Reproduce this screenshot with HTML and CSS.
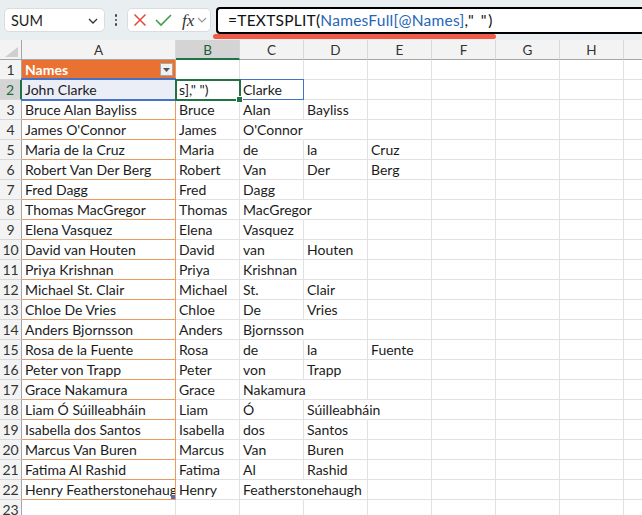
FILE: index.html
```html
<!DOCTYPE html>
<html>
<head>
<meta charset="utf-8">
<link rel="stylesheet" href="styles.css">
</head>
<body>
<div class="topbar">
  <div class="namebox"><span>SUM</span>
    <svg class="chev" width="10" height="6" viewBox="0 0 10 6"><polyline points="1,1 5,5 9,1" fill="none" stroke="#333" stroke-width="1.3"/></svg>
  </div>
  <div class="dots"><i></i><i></i><i></i></div>
  <div class="fxbox">
    <svg width="14" height="14" viewBox="0 0 14 14"><path d="M1.5 1.5 L12.5 12.5 M12.5 1.5 L1.5 12.5" stroke="#e5483c" stroke-width="1.5" fill="none"/></svg>
    <svg width="17" height="14" viewBox="0 0 17 14"><polyline points="1,7 6,12 16,2" stroke="#3aa04c" stroke-width="1.6" fill="none"/></svg>
    <span class="fx">fx</span>
    <svg width="10" height="6" viewBox="0 0 10 6"><polyline points="1,1 5,5 9,1" fill="none" stroke="#9a9a9a" stroke-width="1.2"/></svg>
  </div>
  <div class="formula">=TEXTSPLIT(<span class="ref">NamesFull[@Names]</span><span class="tail">," ")</span></div>
</div>
<div class="underline"></div>
<div class="sheet">
  <div class="corner"><svg width="13" height="10" viewBox="0 0 13 10"><polygon points="13,0 13,10 0,10" fill="#cfcfcf"/></svg></div>
  <div class="ch">A</div><div class="ch sel">B</div><div class="ch">C</div><div class="ch">D</div><div class="ch">E</div><div class="ch">F</div><div class="ch">G</div><div class="ch">H</div><div class="ch"></div>

  <div class="rh">1</div><div class="c th">Names<span class="filt"><svg width="7" height="4" viewBox="0 0 7 4"><polygon points="0,0 7,0 3.5,4" fill="#555"/></svg></span></div><div class="c"></div><div class="c"></div><div class="c"></div><div class="c"></div><div class="c"></div><div class="c"></div><div class="c"></div><div class="c"></div>

  <div class="rh rsel">2</div><div class="c t a2">John Clarke</div><div class="c b2">s]," ")</div><div class="c c2">Clarke</div><div class="c"></div><div class="c"></div><div class="c"></div><div class="c"></div><div class="c"></div><div class="c"></div>

  <div class="rh">3</div><div class="c t">Bruce Alan Bayliss</div><div class="c">Bruce</div><div class="c">Alan</div><div class="c">Bayliss</div><div class="c"></div><div class="c"></div><div class="c"></div><div class="c"></div><div class="c"></div>

  <div class="rh">4</div><div class="c t">James O'Connor</div><div class="c">James</div><div class="c ov">O'Connor</div><div class="c"></div><div class="c"></div><div class="c"></div><div class="c"></div><div class="c"></div><div class="c"></div>

  <div class="rh">5</div><div class="c t">Maria de la Cruz</div><div class="c">Maria</div><div class="c">de</div><div class="c">la</div><div class="c">Cruz</div><div class="c"></div><div class="c"></div><div class="c"></div><div class="c"></div>

  <div class="rh">6</div><div class="c t">Robert Van Der Berg</div><div class="c">Robert</div><div class="c">Van</div><div class="c">Der</div><div class="c">Berg</div><div class="c"></div><div class="c"></div><div class="c"></div><div class="c"></div>

  <div class="rh">7</div><div class="c t">Fred Dagg</div><div class="c">Fred</div><div class="c">Dagg</div><div class="c"></div><div class="c"></div><div class="c"></div><div class="c"></div><div class="c"></div><div class="c"></div>

  <div class="rh">8</div><div class="c t">Thomas MacGregor</div><div class="c">Thomas</div><div class="c ov">MacGregor</div><div class="c"></div><div class="c"></div><div class="c"></div><div class="c"></div><div class="c"></div><div class="c"></div>

  <div class="rh">9</div><div class="c t">Elena Vasquez</div><div class="c">Elena</div><div class="c">Vasquez</div><div class="c"></div><div class="c"></div><div class="c"></div><div class="c"></div><div class="c"></div><div class="c"></div>

  <div class="rh">10</div><div class="c t">David van Houten</div><div class="c">David</div><div class="c">van</div><div class="c">Houten</div><div class="c"></div><div class="c"></div><div class="c"></div><div class="c"></div><div class="c"></div>

  <div class="rh">11</div><div class="c t">Priya Krishnan</div><div class="c">Priya</div><div class="c">Krishnan</div><div class="c"></div><div class="c"></div><div class="c"></div><div class="c"></div><div class="c"></div><div class="c"></div>

  <div class="rh">12</div><div class="c t">Michael St. Clair</div><div class="c">Michael</div><div class="c">St.</div><div class="c">Clair</div><div class="c"></div><div class="c"></div><div class="c"></div><div class="c"></div><div class="c"></div>

  <div class="rh">13</div><div class="c t">Chloe De Vries</div><div class="c">Chloe</div><div class="c">De</div><div class="c">Vries</div><div class="c"></div><div class="c"></div><div class="c"></div><div class="c"></div><div class="c"></div>

  <div class="rh">14</div><div class="c t">Anders Bjornsson</div><div class="c">Anders</div><div class="c ov">Bjornsson</div><div class="c"></div><div class="c"></div><div class="c"></div><div class="c"></div><div class="c"></div><div class="c"></div>

  <div class="rh">15</div><div class="c t">Rosa de la Fuente</div><div class="c">Rosa</div><div class="c">de</div><div class="c">la</div><div class="c">Fuente</div><div class="c"></div><div class="c"></div><div class="c"></div><div class="c"></div>

  <div class="rh">16</div><div class="c t">Peter von Trapp</div><div class="c">Peter</div><div class="c">von</div><div class="c">Trapp</div><div class="c"></div><div class="c"></div><div class="c"></div><div class="c"></div><div class="c"></div>

  <div class="rh">17</div><div class="c t">Grace Nakamura</div><div class="c">Grace</div><div class="c ov">Nakamura</div><div class="c"></div><div class="c"></div><div class="c"></div><div class="c"></div><div class="c"></div><div class="c"></div>

  <div class="rh">18</div><div class="c t">Liam Ó Súilleabháin</div><div class="c">Liam</div><div class="c">Ó</div><div class="c ov">Súilleabháin</div><div class="c"></div><div class="c"></div><div class="c"></div><div class="c"></div><div class="c"></div>

  <div class="rh">19</div><div class="c t">Isabella dos Santos</div><div class="c">Isabella</div><div class="c">dos</div><div class="c">Santos</div><div class="c"></div><div class="c"></div><div class="c"></div><div class="c"></div><div class="c"></div>

  <div class="rh">20</div><div class="c t">Marcus Van Buren</div><div class="c">Marcus</div><div class="c">Van</div><div class="c">Buren</div><div class="c"></div><div class="c"></div><div class="c"></div><div class="c"></div><div class="c"></div>

  <div class="rh">21</div><div class="c t">Fatima Al Rashid</div><div class="c">Fatima</div><div class="c">Al</div><div class="c">Rashid</div><div class="c"></div><div class="c"></div><div class="c"></div><div class="c"></div><div class="c"></div>

  <div class="rh">22</div><div class="c t last">Henry Featherstonehaugh</div><div class="c">Henry</div><div class="c ov">Featherstonehaugh</div><div class="c"></div><div class="c"></div><div class="c"></div><div class="c"></div><div class="c"></div><div class="c"></div>

  <div class="rh">23</div><div class="c"></div><div class="c"></div><div class="c"></div><div class="c"></div><div class="c"></div><div class="c"></div><div class="c"></div><div class="c"></div><div class="c"></div>
</div>
</body>
</html>
```

FILE: styles.css
```css
html, body {
  margin: 0;
  padding: 0;
}
body {
  width: 642px;
  height: 515px;
  overflow: hidden;
  background: #ffffff;
  font-family: Lato, "Liberation Sans", sans-serif;
  color: #1b1b1b;
  position: relative;
}
.topbar {
  height: 40px;
  background: #e9eef1;
  display: flex;
  align-items: center;
  padding-left: 4px;
  box-sizing: border-box;
}
.namebox {
  width: 101px;
  height: 24px;
  box-sizing: border-box;
  background: #fff;
  border: 1px solid #dcdcdc;
  border-radius: 5px;
  display: flex;
  align-items: center;
  justify-content: space-between;
  padding: 0 6px 0 6px;
  font-size: 14.5px;
  color: #1f1f1f;
}
.namebox .chev { margin-top: 1px; }
.dots {
  width: 4px;
  margin-left: 9px;
  margin-right: 9px;
  display: flex;
  flex-direction: column;
  gap: 2px;
  align-items: center;
}
.dots i {
  display: block;
  width: 2.5px;
  height: 2.5px;
  border-radius: 50%;
  background: #444;
}
.fxbox {
  width: 84px;
  height: 24px;
  box-sizing: border-box;
  background: #fff;
  border: 1px solid #dcdcdc;
  border-radius: 5px;
  display: flex;
  align-items: center;
  padding-left: 5px;
  gap: 8px;
}
.fx {
  font-family: "Liberation Serif", serif;
  font-style: italic;
  font-size: 17px;
  color: #333;
  margin-left: 2px;
  margin-right: -5px;
  line-height: 1;
}
.formula {
  margin-left: 5px;
  flex: 1;
  height: 27px;
  box-sizing: border-box;
  border: 2px solid #000;
  border-right: none;
  border-radius: 4px 0 0 4px;
  background: #fff;
  padding-left: 10px;
  font-size: 15.5px;
  letter-spacing: 0.25px;
  line-height: 23px;
  color: #111;
  white-space: nowrap;
}
.formula .ref { color: #2366b7; }
.formula .tail { letter-spacing: 1.6px; }
.underline {
  position: absolute;
  left: 213px;
  top: 34px;
  width: 283px;
  height: 5px;
  border-radius: 3px;
  background: #f05a47;
  z-index: 5;
}
.sheet {
  display: grid;
  grid-template-columns: 22px 154px repeat(7, 64px) 40px;
  grid-auto-rows: 20px;
}
.sheet > div {
  box-sizing: border-box;
  white-space: nowrap;
}
.corner {
  background: #f3f3f3;
  border-right: 1px solid #a6a6a6;
  border-bottom: 1px solid #a6a6a6;
  display: flex;
  align-items: flex-end;
  justify-content: flex-end;
  padding: 0 3px 2px 0;
}
.ch {
  background: #f3f3f3;
  border-right: 1px solid #d8d8d8;
  border-bottom: 1px solid #a6a6a6;
  text-align: center;
  font-size: 13.5px;
  line-height: 20px;
  color: #333;
}
.ch.sel {
  background: #d4d4d4;
  border-bottom: 2px solid #217346;
  color: #1d5f3a;
}
.rh {
  background: #f3f3f3;
  border-right: 1px solid #a6a6a6;
  border-bottom: 1px solid #d8d8d8;
  text-align: center;
  font-size: 14px;
  line-height: 19px;
  color: #333;
}
.rh.rsel {
  background: #d4d4d4;
  border-right: 2px solid #217346;
  color: #1d6b40;
}
.c {
  border-right: 1px solid #e1e1e1;
  border-bottom: 1px solid #e1e1e1;
  padding: 0 3px;
  font-size: 14px;
  line-height: 20px;
  overflow: hidden;
  position: relative;
}
.c.ov {
  overflow: visible;
  border-right-color: transparent;
  z-index: 2;
}
.c.t {
  border-right: 1px solid #ec9a62;
  border-bottom: 1px solid #ec9a62;
}
.c.th {
  background: #e97132;
  color: #fff;
  font-weight: bold;
  border-right: 1px solid #ec9a62;
  overflow: visible;
}
.filt {
  position: absolute;
  right: 2px;
  top: 3px;
  width: 13px;
  height: 13px;
  box-sizing: border-box;
  background: #f1f1f1;
  border: 1px solid #a8a8a8;
  display: flex;
  align-items: center;
  justify-content: center;
}
.c.a2 {
  background: #ebeef7;
  overflow: visible;
}
.c.a2::after {
  content: "";
  position: absolute;
  left: -1px;
  right: -1px;
  top: -2px;
  bottom: -2px;
  border-top: 2px solid #4472c4;
  border-bottom: 2px solid #4472c4;
}
.c.b2 {
  overflow: visible;
  z-index: 3;
}
.c.b2::before {
  content: "";
  position: absolute;
  left: -1px;
  right: -2px;
  top: -1px;
  bottom: -2px;
  border: 2px solid #217346;
}
.c.b2::after {
  content: "";
  position: absolute;
  right: -4px;
  bottom: -4px;
  width: 5px;
  height: 5px;
  background: #217346;
  border: 1px solid #fff;
}
.c.c2 {
  overflow: visible;
}
.c.c2::after {
  content: "";
  position: absolute;
  left: 0;
  right: -1px;
  top: -1px;
  bottom: -1px;
  border: 1px solid #4472c4;
  border-left: none;
}
.c.last::after {
  content: "";
  position: absolute;
  right: 0;
  bottom: 0;
  width: 4px;
  height: 4px;
  background: #4a6fc8;
}
```
